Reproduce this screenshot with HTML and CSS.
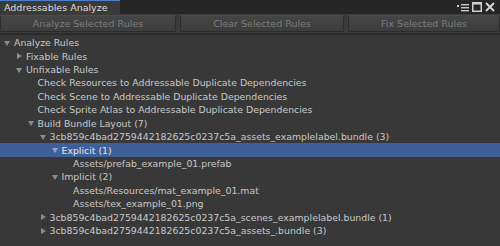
FILE: index.html
```html
<!DOCTYPE html>
<html lang="en">
<head>
  <meta charset="UTF-8">
  <title>Addressables Analyze</title>
  <link rel="stylesheet" href="styles.css">
</head>
<body>
  <div class="window">
    <div class="tabbar">
      <div class="tab">Addressables Analyze</div>
      <div class="tab-icons">
        <svg width="12" height="9" viewBox="0 0 12 9">
          <rect x="0" y="2" width="2" height="2" fill="#c8c8c8"/>
          <rect x="4" y="1" width="8" height="1.4" fill="#c8c8c8"/>
          <rect x="4" y="4" width="8" height="1.4" fill="#c8c8c8"/>
          <rect x="4" y="7" width="8" height="1.4" fill="#c8c8c8"/>
        </svg>
        <svg width="10" height="10" viewBox="0 0 10 10">
          <rect x="0.75" y="0.75" width="8.5" height="8.5" fill="none" stroke="#d0d0d0" stroke-width="1.5"/>
          <rect x="0.75" y="0.75" width="8.5" height="1.8" fill="#d0d0d0"/>
        </svg>
        <svg width="10" height="10" viewBox="0 0 10 10">
          <path d="M1 1 L9 9 M9 1 L1 9" stroke="#d8d8d8" stroke-width="1.8"/>
        </svg>
      </div>
    </div>

    <div class="toolbar">
      <button class="tool-button">Analyze Selected Rules</button>
      <button class="tool-button">Clear Selected Rules</button>
      <button class="tool-button">Fix Selected Rules</button>
    </div>

    <ul class="tree">
      <li class="row d0"><span class="arrow open"></span>Analyze Rules</li>
      <li class="row d1"><span class="arrow"></span>Fixable Rules</li>
      <li class="row d1"><span class="arrow open"></span>Unfixable Rules</li>
      <li class="row d2"><span class="leaf"></span>Check Resources to Addressable Duplicate Dependencies</li>
      <li class="row d2"><span class="leaf"></span>Check Scene to Addressable Duplicate Dependencies</li>
      <li class="row d2"><span class="leaf"></span>Check Sprite Atlas to Addressable Duplicate Dependencies</li>
      <li class="row d2"><span class="arrow open"></span>Build Bundle Layout (7)</li>
      <li class="row d3"><span class="arrow open"></span>3cb859c4bad2759442182625c0237c5a_assets_examplelabel.bundle (3)</li>
      <li class="row d4 selected"><span class="arrow open"></span>Explicit (1)</li>
      <li class="row d5"><span class="leaf"></span>Assets/prefab_example_01.prefab</li>
      <li class="row d4"><span class="arrow open"></span>Implicit (2)</li>
      <li class="row d5"><span class="leaf"></span>Assets/Resources/mat_example_01.mat</li>
      <li class="row d5"><span class="leaf"></span>Assets/tex_example_01.png</li>
      <li class="row d3"><span class="arrow"></span>3cb859c4bad2759442182625c0237c5a_scenes_examplelabel.bundle (1)</li>
      <li class="row d3"><span class="arrow"></span>3cb859c4bad2759442182625c0237c5a_assets_.bundle (3)</li>
    </ul>
  </div>
</body>
</html>
```

FILE: styles.css
```css
body {
  margin: 0;
  background: #383838;
  font-family: "DejaVu Sans", Verdana, sans-serif;
  font-size: 9.35px;
  color: #c8c8c8;
}

.window {
  width: 500px;
  height: 246px;
  overflow: hidden;
  background: #383838;
}

.tabbar {
  display: flex;
  justify-content: space-between;
  align-items: stretch;
  height: 14px;
  background: #262626;
}

.tab {
  width: 116px;
  padding-left: 4px;
  line-height: 13px;
  font-size: 9.5px;
  background: #3a3a3a;
  border-top: 1px solid #4a80c8;
  color: #dcdcdc;
}

.tab-icons {
  display: flex;
  align-items: center;
  gap: 3px;
  padding-right: 5px;
}

.toolbar {
  display: grid;
  grid-template-columns: 176px 164px 1fr;
  gap: 4px;
  height: 18px;
  padding-top: 1px;
  background: #3c3c3c;
  border-bottom: 2px solid #2a2a2a;
}

.tool-button {
  font-family: inherit;
  font-size: 9.5px;
  color: #7c7c7c;
  background: linear-gradient(#464646, #3c3c3c);
  border: 1px solid #2c2c2c;
  border-top-color: #4c4c4c;
  border-radius: 2px;
  padding: 0;
  height: 17px;
}

.tree {
  list-style: none;
  margin: 0;
  padding: 1px 0 0;
}

.row {
  display: flex;
  align-items: center;
  height: 13.43px;
  white-space: nowrap;
}

.row.selected {
  background: #3e5f97;
  color: #e8e8e8;
}

.d0 { padding-left: 2px; }
.d1 { padding-left: 14px; }
.d2 { padding-left: 25.5px; }
.d3 { padding-left: 37.5px; }
.d4 { padding-left: 49.5px; }
.d5 { padding-left: 61px; }

.arrow,
.leaf {
  width: 12px;
  height: 8px;
  flex-shrink: 0;
  position: relative;
}

.arrow::before {
  content: "";
  position: absolute;
  left: 3px;
  top: 1px;
  border-left: 5px solid #8c8c8c;
  border-top: 3.5px solid transparent;
  border-bottom: 3.5px solid transparent;
}

.arrow.open::before {
  left: 2px;
  top: 2px;
  border-top: 5px solid #8c8c8c;
  border-left: 3.5px solid transparent;
  border-right: 3.5px solid transparent;
  border-bottom: none;
}

.selected .arrow.open::before {
  border-top-color: #8fa6c8;
}
```
